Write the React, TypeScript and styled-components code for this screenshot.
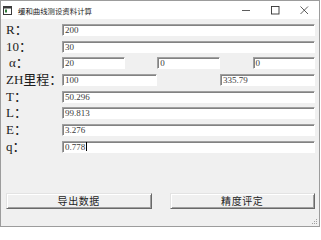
import React from "react";
import styled, { createGlobalStyle } from "styled-components";

const Global = createGlobalStyle`
  html, body { margin: 0; padding: 0; background: #ffffff; }
  body { width: 321px; height: 228px; overflow: hidden; }
  * { box-sizing: border-box; }
`;

const Window = styled.div`
  position: relative;
  width: 320px;
  height: 227px;
  border: 1px solid #9c9c9c;
  background: #f0f0f0;
  display: flex;
  flex-direction: column;
  font-family: "Liberation Serif", "Noto Sans CJK SC", serif;
`;

const TitleBar = styled.div`
  height: 18px;
  background: #ffffff;
  display: flex;
  align-items: center;
  padding-left: 2px;
`;

const TitleText = styled.span`
  font-family: "Noto Sans CJK SC", sans-serif;
  font-size: 7.4px;
  color: #1a1a1a;
  margin-left: 6px;
`;

const Controls = styled.div`
  margin-left: auto;
  display: flex;
  align-items: center;
  height: 100%;
`;

const CtrlBtn = styled.div`
  width: 29px;
  height: 18px;
  display: flex;
  align-items: center;
  justify-content: center;
`;

const Body = styled.div`
  flex: 1;
  display: flex;
  flex-direction: column;
  padding: 5px 4px 0 4px;
`;

const Rows = styled.div`
  display: flex;
  flex-direction: column;
  gap: 4.7px;
`;

const Row = styled.div`
  display: grid;
  grid-template-columns: 57px 1fr;
  align-items: center;
  height: 12px;
`;

const Label = styled.span<{ $indent?: number }>`
  font-family: "Liberation Serif", "Noto Sans CJK SC", serif;
  font-size: 13px;
  line-height: 12px;
  color: #1c1c1c;
  padding-left: ${(p) => p.$indent ?? 1}px;
  white-space: nowrap;
`;

const Fields = styled.div<{ $cols: number; $w: number }>`
  display: grid;
  grid-template-columns: repeat(${(p) => p.$cols}, ${(p) => p.$w}px);
  justify-content: space-between;
  height: 12px;
`;

const Field = styled.div`
  height: 12px;
  background: #ffffff;
  border-top: 1px solid #a0a0a0;
  border-left: 1px solid #a0a0a0;
  border-bottom: 1px solid #ffffff;
  border-right: 1px solid #ffffff;
  box-shadow: inset 1px 1px 0 #828282;
  display: flex;
  align-items: center;
  padding-left: 2px;
  font-family: "Liberation Serif", serif;
  font-size: 9px;
  color: #3a3a3a;
  overflow: hidden;
  white-space: nowrap;
`;

const Caret = styled.span`
  display: inline-block;
  width: 1px;
  height: 9px;
  background: #000;
  margin-left: 0.5px;
`;

const ButtonRow = styled.div`
  display: grid;
  grid-template-columns: 1fr 1fr;
  gap: 18px;
  margin-top: 40px;
  padding-left: 1px;
`;

const Button = styled.div`
  height: 16px;
  background: #f0f0f0;
  border-top: 1px solid #e3e3e3;
  border-left: 1px solid #e3e3e3;
  border-right: 1px solid #696969;
  border-bottom: 1px solid #696969;
  box-shadow: inset 1px 1px 0 #ffffff, inset -1px -1px 0 #a0a0a0;
  display: flex;
  align-items: center;
  justify-content: center;
  font-family: "Noto Sans CJK SC", sans-serif;
  font-size: 10px;
  color: #1e1e1e;
  letter-spacing: 0.6px;
`;

const Grip = styled.svg`
  position: absolute;
  right: 1px;
  bottom: 1px;
`;

function AppIcon() {
  return (
    <svg width="9" height="9" viewBox="0 0 9 9">
      <rect x="0.5" y="0.5" width="8" height="8" fill="#ffffff" stroke="#3a3a3a" />
      <rect x="1" y="1" width="7" height="1.5" fill="#3a3a3a" />
      <rect x="2" y="3.5" width="2" height="3" fill="#2f7d3a" />
    </svg>
  );
}

export default function App() {
  return (
    <>
      <Global />
      <Window>
        <TitleBar>
          <AppIcon />
          <TitleText>缓和曲线测设资料计算</TitleText>
          <Controls>
            <CtrlBtn>
              <svg width="9" height="9" viewBox="0 0 9 9">
                <line x1="0" y1="4.5" x2="8" y2="4.5" stroke="#333" strokeWidth="0.8" />
              </svg>
            </CtrlBtn>
            <CtrlBtn>
              <svg width="9" height="9" viewBox="0 0 9 9">
                <rect x="0.5" y="0.5" width="7.5" height="7.5" fill="none" stroke="#333" strokeWidth="0.9" />
              </svg>
            </CtrlBtn>
            <CtrlBtn>
              <svg width="9" height="9" viewBox="0 0 9 9">
                <line x1="0.5" y1="0.5" x2="8" y2="8" stroke="#333" strokeWidth="0.8" />
                <line x1="8" y1="0.5" x2="0.5" y2="8" stroke="#333" strokeWidth="0.8" />
              </svg>
            </CtrlBtn>
          </Controls>
        </TitleBar>
        <Body>
          <Rows>
            <Row>
              <Label>R：</Label>
              <Fields $cols={1} $w={253}>
                <Field>200</Field>
              </Fields>
            </Row>
            <Row>
              <Label>10：</Label>
              <Fields $cols={1} $w={253}>
                <Field>30</Field>
              </Fields>
            </Row>
            <Row>
              <Label $indent={4}>α：</Label>
              <Fields $cols={3} $w={62.5}>
                <Field>20</Field>
                <Field>0</Field>
                <Field>0</Field>
              </Fields>
            </Row>
            <Row>
              <Label>ZH里程：</Label>
              <Fields $cols={2} $w={95}>
                <Field>100</Field>
                <Field>335.79</Field>
              </Fields>
            </Row>
            <Row>
              <Label>T：</Label>
              <Fields $cols={1} $w={253}>
                <Field>50.296</Field>
              </Fields>
            </Row>
            <Row>
              <Label>L：</Label>
              <Fields $cols={1} $w={253}>
                <Field>99.813</Field>
              </Fields>
            </Row>
            <Row>
              <Label>E：</Label>
              <Fields $cols={1} $w={253}>
                <Field>3.276</Field>
              </Fields>
            </Row>
            <Row>
              <Label>q：</Label>
              <Fields $cols={1} $w={253}>
                <Field>
                  0.778
                  <Caret />
                </Field>
              </Fields>
            </Row>
          </Rows>
          <ButtonRow>
            <Button>导出数据</Button>
            <Button>精度评定</Button>
          </ButtonRow>
        </Body>
        <Grip width="7" height="7" viewBox="0 0 7 7">
          <rect x="5" y="1" width="1" height="1" fill="#a0a0a0" />
          <rect x="3" y="3" width="1" height="1" fill="#a0a0a0" />
          <rect x="5" y="3" width="1" height="1" fill="#a0a0a0" />
          <rect x="1" y="5" width="1" height="1" fill="#a0a0a0" />
          <rect x="3" y="5" width="1" height="1" fill="#a0a0a0" />
          <rect x="5" y="5" width="1" height="1" fill="#a0a0a0" />
        </Grip>
      </Window>
    </>
  );
}
